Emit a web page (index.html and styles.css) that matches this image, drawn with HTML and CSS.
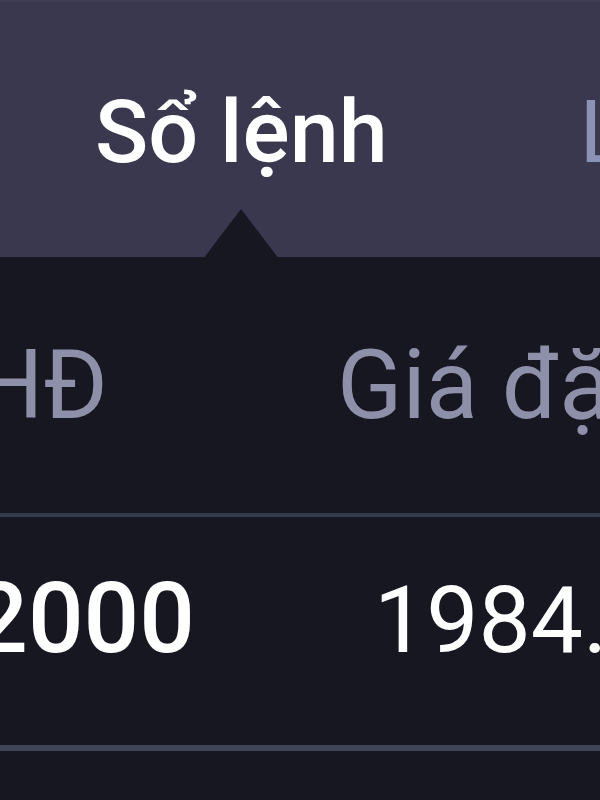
FILE: index.html
```html
<!DOCTYPE html>
<html lang="vi">
<head>
    <meta charset="UTF-8">
    <meta name="viewport" content="width=device-width, initial-scale=1.0">
    <title>Sổ lệnh</title>
    <link rel="stylesheet" href="styles.css">
</head>
<body>
    <div class="tabs">
        <div class="tab active">Sổ lệnh</div>
        <div class="tab">Lịch sử</div>
    </div>

    <div class="orders">
        <div class="row head">
            <div class="cell code">Mã HĐ</div>
            <div class="cell price">Giá đặt</div>
        </div>
        <div class="row">
            <div class="cell code qty">2000</div>
            <div class="cell price value">1984.5</div>
        </div>
    </div>
</body>
</html>
```

FILE: styles.css
```css
html, body {
    margin: 0;
    padding: 0;
}
body {
    width: 600px;
    height: 800px;
    overflow: hidden;
    background-color: #171722;
    font-family: Roboto, 'Noto Sans', sans-serif;
    color: #ffffff;
}
.tabs {
    display: flex;
    gap: 192px;
    height: 257px;
    box-sizing: border-box;
    padding: 86px 0 0 95px;
    background-color: #3a384f;
    border-top: 2px solid #403e56;
    white-space: nowrap;
}
.tab {
    position: relative;
    font-size: 88px;
    line-height: 88px;
    color: #8a92b6;
}
.tab.active {
    color: #ffffff;
    font-weight: 500;
}
/* little arrow pointing at the active tab */
.tab.active::after {
    content: "";
    position: absolute;
    left: 50%;
    top: 121px;
    margin-left: -38px;
    border-left: 38px solid transparent;
    border-right: 38px solid transparent;
    border-bottom: 50px solid #171722;
}
.orders {
    overflow: hidden;
}
.row {
    display: flex;
    align-items: baseline;
    white-space: nowrap;
    padding: 53px 0 77px;
    border-bottom: 6px solid #3d4557;
}
.row.head {
    padding: 80px 0;
    border-bottom: 4px solid #333a4b;
    font-size: 96px;
    line-height: 96px;
    color: #8e8fa8;
}
.cell {
    flex: none;
    box-sizing: border-box;
}
.code {
    width: 500px;
    margin-left: -300px;
    padding-right: 92px;
    text-align: right;
}
.price {
    padding-left: 137px;
}
.qty {
    font-size: 98px;
    line-height: 98px;
    font-weight: 500;
    padding-right: 5px;
}
.value {
    font-size: 93px;
    line-height: 93px;
    padding-left: 174px;
}
```
